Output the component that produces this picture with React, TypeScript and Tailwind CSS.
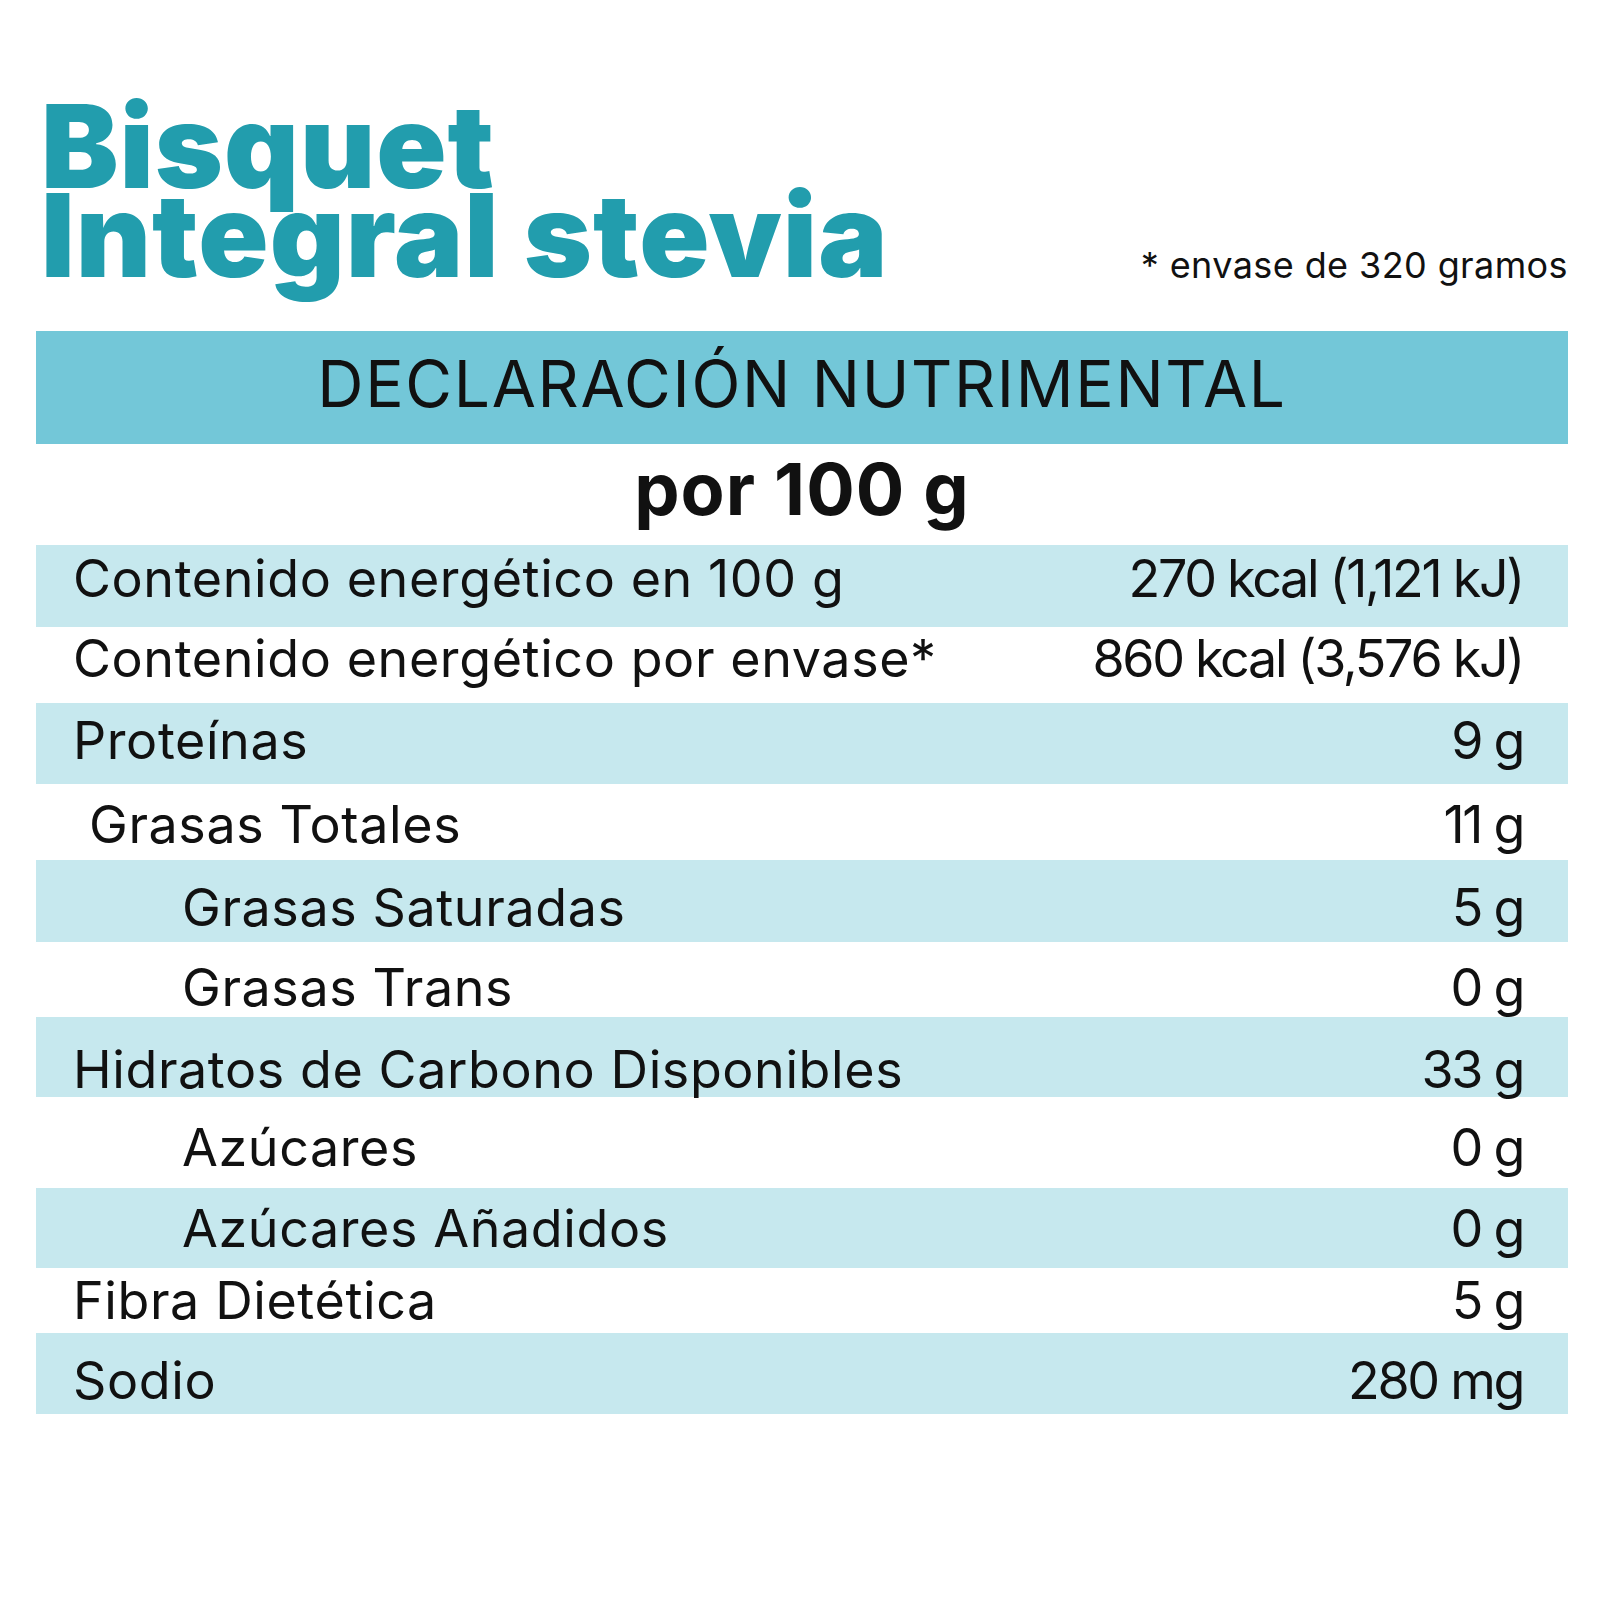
import React from 'react'

type Row = {
  label: string
  value: string
  indent: 0 | 1 | 2
  shaded: boolean
  h: string
  pt: string
}

// alturas y posicion del texto tomadas de la etiqueta original
const rows: Row[] = [
  { label: 'Contenido energético en 100 g', value: '270 kcal (1,121 kJ)', indent: 0, shaded: true, h: 'h-[82px]', pt: 'pt-[8px]' },
  { label: 'Contenido energético por envase*', value: '860 kcal (3,576 kJ)', indent: 0, shaded: false, h: 'h-[76px]', pt: 'pt-[6px]' },
  { label: 'Proteínas', value: '9 g', indent: 0, shaded: true, h: 'h-[81px]', pt: 'pt-[12px]' },
  { label: 'Grasas Totales', value: '11 g', indent: 1, shaded: false, h: 'h-[76px]', pt: 'pt-[15px]' },
  { label: 'Grasas Saturadas', value: '5 g', indent: 2, shaded: true, h: 'h-[82px]', pt: 'pt-[22px]' },
  { label: 'Grasas Trans', value: '0 g', indent: 2, shaded: false, h: 'h-[75px]', pt: 'pt-[20px]' },
  { label: 'Hidratos de Carbono Disponibles', value: '33 g', indent: 0, shaded: true, h: 'h-[80px]', pt: 'pt-[27px]' },
  { label: 'Azúcares', value: '0 g', indent: 2, shaded: false, h: 'h-[91px]', pt: 'pt-[25px]' },
  { label: 'Azúcares Añadidos', value: '0 g', indent: 2, shaded: true, h: 'h-[80px]', pt: 'pt-[15px]' },
  { label: 'Fibra Dietética', value: '5 g', indent: 0, shaded: false, h: 'h-[65px]', pt: 'pt-[7px]' },
  { label: 'Sodio', value: '280 mg', indent: 0, shaded: true, h: 'h-[81px]', pt: 'pt-[22px]' },
]

const indentClass = ['pl-[37px]', 'pl-[53px]', 'pl-[146px]']

const App = () => {
  return (
    <div
      className="min-h-[1600px] w-[1600px] bg-white pl-[36px] pr-[32px] pt-[102px] text-[#111]"
      style={{ fontFamily: 'Inter, "Noto Sans", sans-serif' }}
    >
      {/* titulo */}
      <div className="flex items-end justify-between">
        <h1 className="pl-[5px] text-[116px] font-black leading-[89px] tracking-[1px] text-[#229dad]">
          Bisquet
          <br />
          Integral stevia
        </h1>
        <div className="mb-[-3px] text-[36px] leading-none tracking-[0.4px]">
          * envase de 320 gramos
        </div>
      </div>

      <div className="mt-[51px] flex h-[113px] items-center justify-center bg-[#73c7d8] pb-[8px]">
        <span className="text-[64px] leading-none tracking-[1.7px]">DECLARACIÓN NUTRIMENTAL</span>
      </div>

      <div className="flex h-[101px] justify-center pt-[9px]">
        <span className="text-[72px] font-bold leading-none tracking-[1px]">por 100 g</span>
      </div>

      {rows.map((r) => (
        <div
          key={r.label}
          className={`flex items-start justify-between pr-[45px] text-[52px] leading-none ${r.h} ${r.pt} ${indentClass[r.indent]} ${r.shaded ? 'bg-[#c6e8ee]' : 'bg-white'}`}
        >
          <span className="tracking-[0.6px]">{r.label}</span>
          <span className="tracking-[-2.3px]">{r.value}</span>
        </div>
      ))}
    </div>
  )
}

export default App
